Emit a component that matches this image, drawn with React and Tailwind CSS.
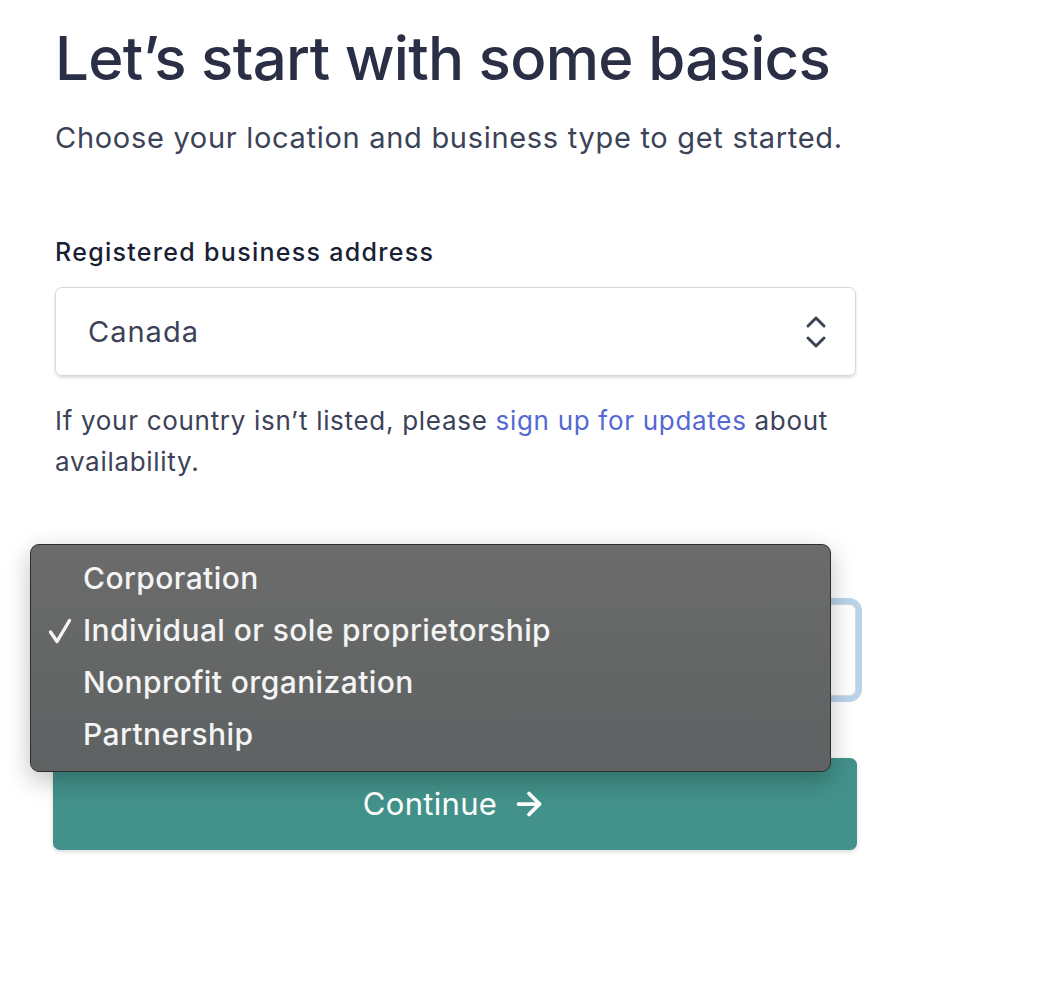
import { ArrowRight } from "lucide-react";

function ChevronUpDown() {
  return (
    <svg width="24" height="34" viewBox="0 0 24 34" fill="none" stroke="#3c4257" strokeWidth="3" strokeLinecap="round" strokeLinejoin="round">
      <path d="M4 11 L12 3 L20 11" />
      <path d="M4 23 L12 31 L20 23" />
    </svg>
  );
}

function Check() {
  return (
    <svg width="24" height="26" viewBox="0 0 24 26" fill="none" stroke="#f4f4f4" strokeWidth="3.4" strokeLinecap="round" strokeLinejoin="round">
      <path d="M2.5 14 L9 23.5 L21.5 2.5" />
    </svg>
  );
}

export default function App() {
  return (
    <div
      className="min-h-[996px] bg-white"
      style={{ fontFamily: "Inter, 'Noto Sans', sans-serif" }}
    >
      <div className="w-[801px] ml-[55px] pt-[22px]">
        <h1 className="text-[60px] leading-[72px] font-medium text-[#2a2f45] tracking-[-0.7px]">
          Let’s start with some basics
        </h1>
        <p className="mt-[26px] text-[29px] leading-[36px] text-[#3c4257] tracking-[0.7px]">
          Choose your location and business type to get started.
        </p>

        <div className="mt-[80px]">
          <label className="block text-[25px] leading-[32px] font-medium text-[#1a1f36] tracking-[1.3px]">
            Registered business address
          </label>
          <div className="mt-[19px] h-[89px] rounded-[7px] border border-[#d5d8de] shadow-[0_2px_3px_rgba(60,66,87,0.18)] flex items-center justify-between pl-[32px] pr-[27px]">
            <span className="text-[29px] text-[#3c4257] tracking-[1px]">Canada</span>
            <ChevronUpDown />
          </div>
          <p className="mt-[24px] text-[26px] leading-[41px] text-[#3c4257] tracking-[0.7px]">
            If your country isn’t listed, please{" "}
            <span className="text-[#5469d4]">sign up for updates</span> about
            availability.
          </p>
        </div>

        <div className="relative mt-[70px]">
          <div className="h-[32px]" />
          <div className="mt-[20px] h-[92px] rounded-[7px] border border-[#d5d8de] ring-[6px] ring-[#b9d3ea]" />

          <div className="absolute left-[-25px] top-[-8px] w-[801px] h-[228px] rounded-[9px] border border-[#2e2e2e] bg-gradient-to-b from-[#6b6b6b] to-[#5e6262] shadow-[0_8px_24px_rgba(0,0,0,0.25)] z-10 pt-[7px]">
            {[
              "Corporation",
              "Individual or sole proprietorship",
              "Nonprofit organization",
              "Partnership",
            ].map((item, i) => (
              <div
                key={item}
                className="relative h-[52px] flex items-center pl-[52px] text-[30px] font-medium text-[#f4f4f4] tracking-[0.4px]"
              >
                {i === 1 && (
                  <span className="absolute left-[17px] top-[14px]">
                    <Check />
                  </span>
                )}
                {item}
              </div>
            ))}
          </div>
        </div>

        <button className="mt-[62px] w-[804px] -ml-[2px] h-[92px] rounded-[7px] bg-[#42918a] flex items-center justify-center gap-[14px] text-white text-[31px] tracking-[0.3px] shadow-[0_2px_4px_rgba(0,0,0,0.15)]">
          Continue
          <ArrowRight size={36} strokeWidth={2.5} />
        </button>
      </div>
    </div>
  );
}
